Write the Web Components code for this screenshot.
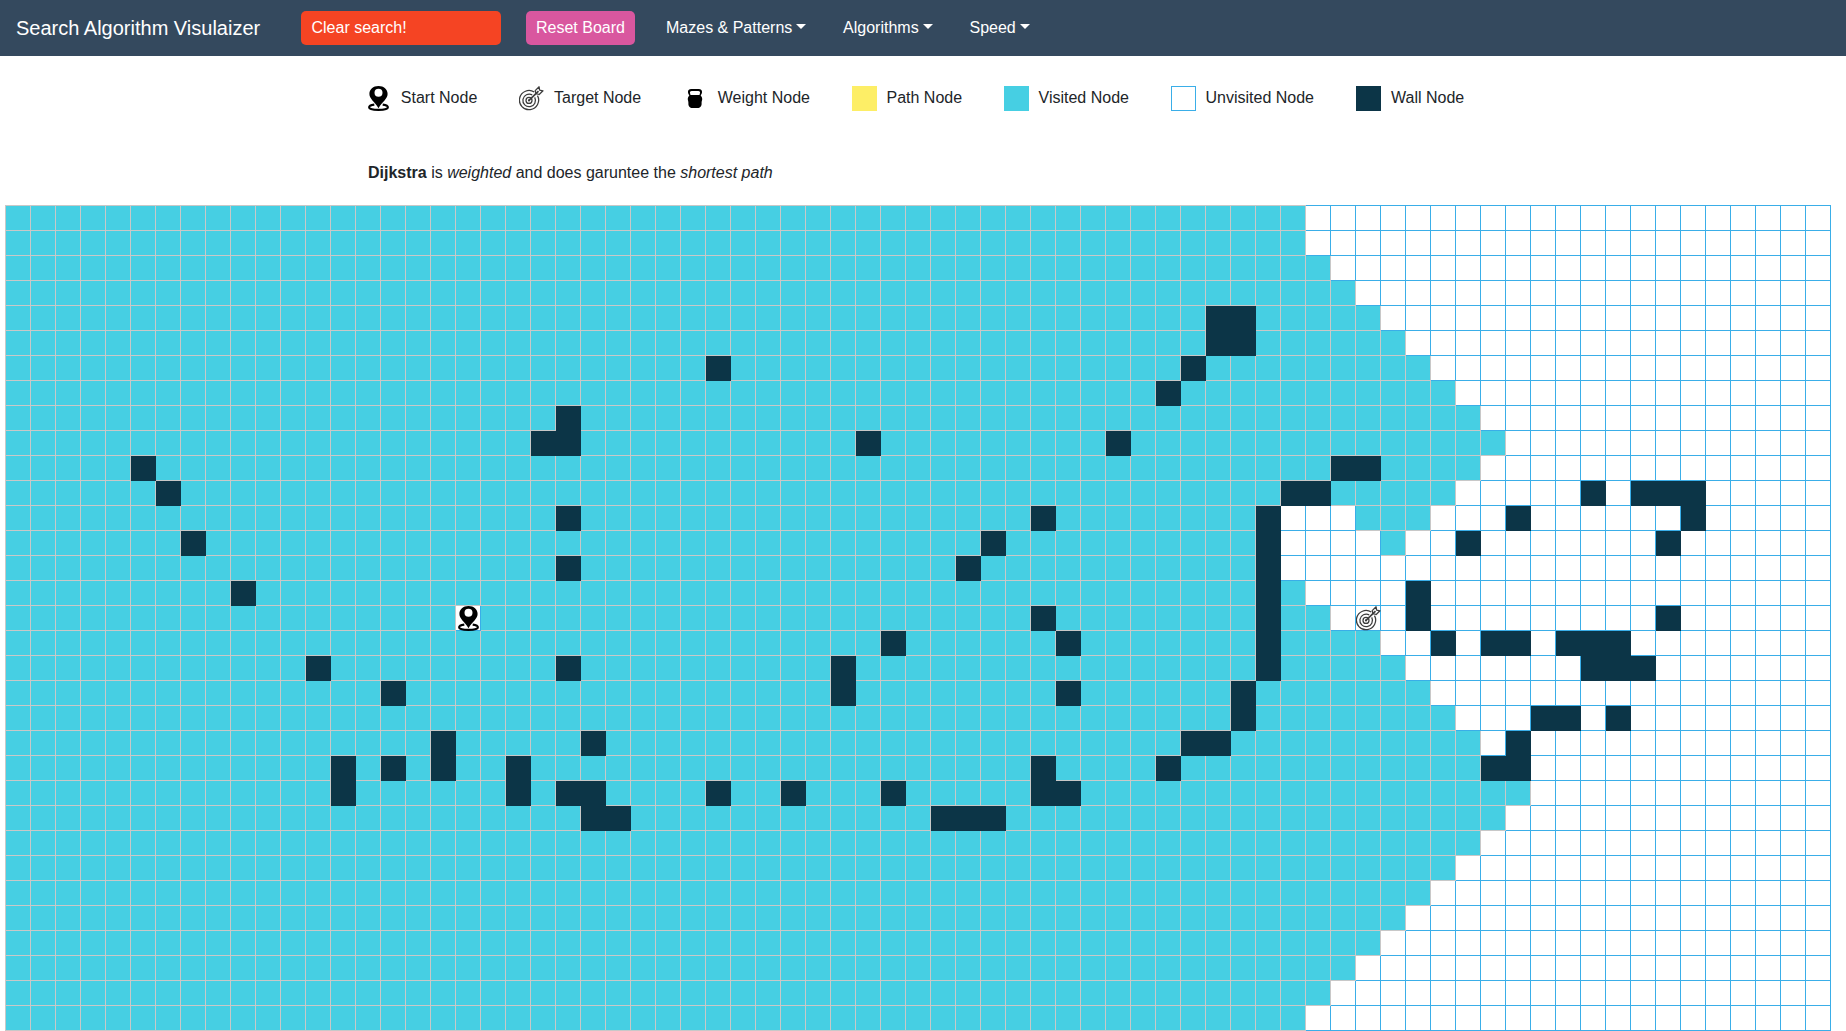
<!DOCTYPE html>
<html lang="en">
<head>
<meta charset="utf-8">
<title>Search Algorithm Visulaizer</title>
<style>
body{margin:0;background:#fff;color:#212529;font:16px/24px "Liberation Sans",Arial,sans-serif;overflow:hidden}
</style>
</head>
<body>
<search-app></search-app>
<script>
const define=(name,html,init)=>customElements.define(name,class extends HTMLElement{
  connectedCallback(){
    if(this.shadowRoot)return;
    this.attachShadow({mode:'open'}).innerHTML=html;
    if(init)init(this,this.shadowRoot);
  }
});

const ICONS={
start:`<svg width="25" height="25" viewBox="0 0 25 25"><path fill="#000" fill-rule="evenodd" d="M10.500 0C5.200 0 1.400 3.500 1.400 8C1.400 12.800 6.500 15.500 10.500 22.200C14.500 15.500 19.600 12.800 19.600 8C19.600 3.500 15.800 0 10.500 0ZM10.500 2.800a4 4 0 1 1 0 8a4 4 0 1 1 0-8Z"/><path fill="none" stroke="#000" stroke-width="2.100" d="M6.300 18.600C3 19.100 1.100 20 1.100 21.200C1.100 22.800 5.300 23.900 10.500 23.900S19.900 22.800 19.900 21.200C19.900 20 18 19.100 14.700 18.600"/></svg>`,
target:`<svg width="25" height="25" viewBox="0 0 25 25"><g fill="none" stroke="#3c3c3c" stroke-width="1.250"><path d="M15.300 6.100A9.600 9.600 0 1 0 18.500 9.600"/><path d="M13.200 8.900A6.300 6.300 0 1 0 15.700 11.400"/><circle cx="10" cy="14.400" r="3"/><path stroke-width="1.600" d="M10 14.400L19.500 5.100"/><path stroke-linejoin="round" d="M16.900 7.600L16.200 4.600L20.100 .8L20.600 4.100L24 4.800L20.200 8.500Z"/></g><circle cx="10" cy="14.400" r="1.100" fill="#3c3c3c"/></svg>`,
weight:`<svg width="25" height="25" viewBox="0 0 25 25"><path fill="#000" fill-rule="evenodd" d="M8.400 3H15.600C18.200 3 19.300 4.400 19 6.500C18.800 7.800 17.900 8.700 17.700 9.800C18.900 10.700 19.300 12.200 19.200 13.600C19.100 14.800 18.500 15.500 18.600 17C18.900 20.200 17 22 14.700 22H9.300C7 22 5.100 20.200 5.400 17C5.500 15.500 4.900 14.800 4.800 13.600C4.700 12.200 5.100 10.700 6.300 9.800C6.100 8.700 5.200 7.800 5 6.500C4.700 4.400 5.800 3 8.400 3ZM8.600 5Q6.800 5 6.900 6.500L7.500 9.100H16.500L17.100 6.500Q17.200 5 15.400 5Z"/></svg>`
};

define('node-icon',`<style>:host{display:block;width:25px;height:25px;flex:none}svg{display:block}</style>`,
  (el,root)=>root.innerHTML+=ICONS[el.getAttribute('kind')]);

define('nav-button',`<style>:host{display:block;box-sizing:border-box;height:34px;padding:5px 10px;border-radius:5px;background:var(--bg);color:#fff;white-space:nowrap}</style><slot></slot>`);

define('nav-menu',`<style>:host{display:flex;align-items:center;color:#fff;white-space:nowrap}
i{margin:-3px 0 0 4px;border:5px solid transparent;border-top-color:#fff;border-bottom:0}</style><slot></slot><i></i>`);

define('nav-bar',`<style>:host{display:flex;align-items:center;box-sizing:border-box;height:56px;padding:0 16px;background:#34495e;color:#fff}
.brand{width:285px;font-size:20px;line-height:30px}
.clear{width:200px;padding-left:10.500px;--bg:#f54423}.reset{width:109px;margin:0 31px 0 25px;--bg:#d9579f}
nav-menu{margin-right:36.800px}</style>
<div class="brand">Search Algorithm Visulaizer</div>
<nav-button class="clear">Clear search!</nav-button><nav-button class="reset">Reset Board</nav-button>
<nav-menu>Mazes &amp; Patterns</nav-menu><nav-menu>Algorithms</nav-menu><nav-menu>Speed</nav-menu>`);

define('legend-item',`<style>:host{display:flex;height:25px;gap:9.500px;white-space:nowrap}
.swatch{box-sizing:border-box;width:25px;height:25px;background:var(--fill);border:1px solid var(--edge,var(--fill))}</style>
<slot name="icon"><span class="swatch"></span></slot><slot></slot>`);

define('node-legend',`<style>:host{display:flex;padding:30px 0 0 368px}
legend-item{box-sizing:border-box}</style>
<legend-item style="width:150.500px;gap:7.800px"><node-icon slot="icon" kind="start"></node-icon>Start Node</legend-item>
<legend-item style="width:164.500px;gap:10.500px"><node-icon slot="icon" kind="target"></node-icon>Target Node</legend-item>
<legend-item style="width:169px;gap:9.800px"><node-icon slot="icon" kind="weight"></node-icon>Weight Node</legend-item>
<legend-item style="width:152px;--fill:#fdee66">Path Node</legend-item>
<legend-item style="width:167px;--fill:#46cfe3">Visited Node</legend-item>
<legend-item style="width:185px;--fill:#fff;--edge:#3aaee8">Unvisited Node</legend-item>
<legend-item style="gap:10px;--fill:#0c3547">Wall Node</legend-item>`);

define('algorithm-note',`<style>:host{display:block;padding:50px 0 20px 368px;height:24px}</style><slot></slot>`);

const COLS=73,ROWS=33,START=[16,18],TARGET=[16,54];
const reach=[52,52,53,54,55,56,57,58,59,60,59,58,50,50,50,50,50,55,56,57,58,59,59,61,60,59,58,57,56,55,54,53,52];
const extra={12:[54,55,56],13:[55],15:[51],16:[51,52]};
const walls={4:[48,49],5:[48,49],6:[28,47],7:[46],8:[22],9:[21,22,34,44],10:[5,53,54],11:[6,51,52,63,65,66,67],
12:[22,41,50,60,67],13:[7,39,50,58,66],14:[22,38,50],15:[9,50,56],16:[41,50,56,66],17:[35,42,50,57,59,60,62,63,64],
18:[12,22,33,50,63,64,65],19:[15,33,42,49],20:[49,61,62,64],21:[17,23,47,48,60],22:[13,15,17,20,41,46,59,60],
23:[13,20,22,23,28,31,35,41,42],24:[23,24,37,38,39]};

define('node-board',`<style>:host{display:block;padding-left:5px}
.grid{display:grid;grid-template-columns:26px repeat(72,25px);grid-template-rows:26px repeat(32,25px)}
.grid>div{border:0 solid #3aaee8;border-width:0 1px 1px 0;background:#fff}
.grid>.v{background:#46cfe3;border-color:#c8c8c8}
.grid>.w{background:#0c3547;border-color:#0c3547}
.grid>.top{border-top-width:1px}.grid>.left{border-left-width:1px}
node-icon[kind=start]{margin-left:1.500px;width:22px}</style><div class="grid"></div>`,
(el,root)=>{
  let out='';
  for(let r=0;r<ROWS;r++)for(let c=0;c<COLS;c++){
    const at=p=>p[0]===r&&p[1]===c;
    let k='',body='';
    if(at(START))body='<node-icon kind="start"></node-icon>';
    else if(at(TARGET))body='<node-icon kind="target"></node-icon>';
    else if((walls[r]||[]).includes(c))k='w';
    else if(c<reach[r]||(extra[r]||[]).includes(c))k='v';
    out+=`<div class="${k}${r?'':' top'}${c?'':' left'}">${body}</div>`;
  }
  root.querySelector('.grid').innerHTML=out;
});

define('search-app',`<style>:host{display:block}</style>
<nav-bar></nav-bar><node-legend></node-legend>
<algorithm-note><b>Dijkstra</b> is <i>weighted</i> and does garuntee the <i>shortest path</i></algorithm-note>
<node-board></node-board>`);
</script>
</body>
</html>
